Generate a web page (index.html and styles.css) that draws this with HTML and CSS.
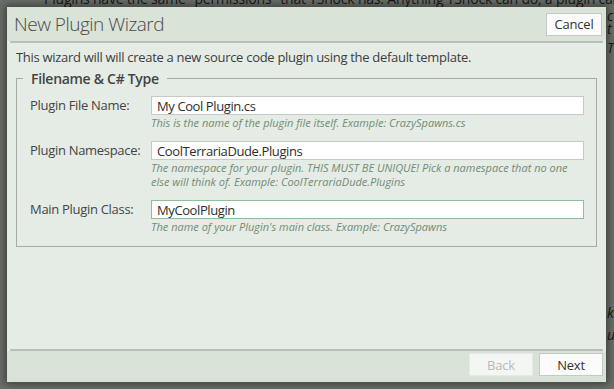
FILE: index.html
```html
<!DOCTYPE html>
<html lang="en">
    <head>
        <meta charset="utf-8">
        <title>New Plugin Wizard</title>
        <link rel="stylesheet" href="styles.css">
    </head>
    <body>
        <div class="page">
            <p class="page-line top">Plugins have the same "permissions" that TShock has. Anything TShock can do, a plugin can do as well. As such,</p>
            <p class="page-line edge l1">c</p>
            <p class="page-line edge l2">t</p>
            <p class="page-line edge l3">T</p>
            <p class="page-line edge l4">k</p>
            <p class="page-line edge l5">u</p>
        </div>

        <div class="dialog">
            <div class="dialog-header">
                <h2>New Plugin Wizard</h2>
                <button class="btn" type="button">Cancel</button>
            </div>
            <div class="rule"></div>

            <div class="dialog-body">
                <p class="intro">This wizard will will create a new source code plugin using the default template.</p>
                <fieldset class="group">
                    <legend>Filename &amp; C# Type</legend>

                    <div class="field">
                        <label for="file">Plugin File Name:</label>
                        <div>
                            <input id="file" type="text" value="My Cool Plugin.cs">
                            <p class="hint">This is the name of the plugin file itself. Example: CrazySpawns.cs</p>
                        </div>
                    </div>

                    <div class="field">
                        <label for="ns">Plugin Namespace:</label>
                        <div>
                            <input id="ns" type="text" value="CoolTerrariaDude.Plugins">
                            <p class="hint">The namespace for your plugin. THIS MUST BE UNIQUE! Pick a namespace that no one else will think of. Example: CoolTerrariaDude.Plugins</p>
                        </div>
                    </div>

                    <div class="field">
                        <label for="cls">Main Plugin Class:</label>
                        <div>
                            <input id="cls" class="focused" type="text" value="MyCoolPlugin">
                            <p class="hint">The name of your Plugin's main class. Example: CrazySpawns</p>
                        </div>
                    </div>
                </fieldset>
            </div>

            <div class="rule"></div>
            <div class="dialog-footer">
                <button class="btn" type="button" disabled>Back</button>
                <button class="btn" type="button">Next</button>
            </div>
        </div>
    </body>
</html>
```

FILE: styles.css
```css
html, body {
    margin: 0;
    width: 614px;
    height: 389px;
    overflow: hidden;
}
body {
    position: relative;
    background: #6b6f6a;
    font-family: "Open Sans", "Noto Sans", sans-serif;
    color: #3d3d3d;
}
.page {
    color: #151715;
    font-size: 14px;
    line-height: 12px;
}
.page-line {
    margin: 0;
    position: absolute;
    white-space: nowrap;
}
.page-line.top {
    left: 44px;
    top: -7px;
    letter-spacing: -0.2px;
}
.page-line.edge {
    left: 607px;
    font-style: italic;
}
.l1 { top: 10px; }
.l2 { top: 23px; }
.l3 { top: 42px; font-style: normal; }
.l4 { top: 307px; }
.l5 { top: 329px; }

.dialog {
    position: absolute;
    left: 7px;
    top: 7px;
    width: 599px;
    height: 375px;
    background: #e5ece5;
    box-shadow: 0 0 8px 2px rgba(0, 0, 0, 0.45);
    display: flex;
    flex-direction: column;
    letter-spacing: -0.3px;
}
.dialog-header {
    height: 34px;
    background: #d9e3d8;
    display: flex;
    align-items: center;
    justify-content: space-between;
    padding: 0 4px 0 7px;
}
.dialog-header h2 {
    margin: 0;
    font-size: 19px;
    font-weight: 300;
    letter-spacing: -0.5px;
    color: #4a4a4a;
}
.rule {
    height: 2px;
    margin: 0 3px;
    background: #b7c0b6;
}
.btn {
    font-family: inherit;
    font-size: 13px;
    letter-spacing: -0.2px;
    color: #333;
    background: #fbfbfb;
    border: 1px solid #c4c9c4;
    height: 23px;
    width: 56px;
    padding: 0;
}
.btn:disabled {
    background: #f4f6f4;
    border-color: #e6eae6;
    color: #b9b9b9;
}
.dialog-body {
    flex: 1;
    padding: 5px 9px 0 9px;
}
.intro {
    margin: 0 0 3px;
    font-size: 13px;
    line-height: 18px;
}
.group {
    margin: 0;
    border: 1px solid #a3aba2;
    padding: 8px 12px 12px 13px;
}
.group legend {
    font-size: 14px;
    font-weight: 600;
    color: #444;
    padding: 0 8px;
    margin-left: -7px;
}
.field {
    display: grid;
    grid-template-columns: 121px 1fr;
    margin-bottom: 11px;
}
.field:last-child {
    margin-bottom: 0;
}
.field label {
    font-size: 13px;
    line-height: 19px;
    color: #444;
}
.field input {
    display: block;
    box-sizing: border-box;
    width: 100%;
    height: 19px;
    margin: 0;
    padding: 0 5px;
    border: 1px solid #c6c9c6;
    background: #fff;
    font-family: inherit;
    font-size: 13px;
    letter-spacing: -0.4px;
    color: #2d2d2d;
}
.field input.focused {
    border-color: #8cbf9c;
}
.hint {
    margin: 1px 0 0;
    font-size: 11px;
    line-height: 14px;
    font-style: italic;
    letter-spacing: 0;
    color: #728b74;
}
.dialog-footer {
    height: 29px;
    background: #d8e2d6;
    display: flex;
    justify-content: flex-end;
    align-items: flex-start;
    gap: 6px;
    padding: 2px 3px 0;
}
.dialog-footer .btn {
    width: 64px;
}
```
